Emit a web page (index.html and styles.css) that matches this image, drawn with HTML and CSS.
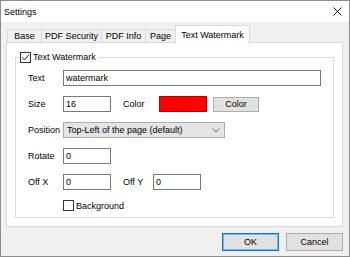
FILE: index.html
```html
<!DOCTYPE html>
<html>
<head>
    <meta charset="utf-8">
    <link rel="stylesheet" href="styles.css">
</head>
<body>
<div class="window">
    <div class="titlebar">
        <span>Settings</span>
        <svg class="close" width="9" height="9" viewBox="0 0 9 9">
            <path d="M0.5 0.5 L8.5 8.5 M8.5 0.5 L0.5 8.5" stroke="#000" stroke-width="0.9" fill="none"/>
        </svg>
    </div>

    <div class="tabs">
        <div class="tab tab-base">Base</div>
        <div class="tab tab-security">PDF Security</div>
        <div class="tab tab-info">PDF Info</div>
        <div class="tab tab-page">Page</div>
        <div class="tab tab-watermark active">Text Watermark</div>
    </div>

    <div class="panel">
        <fieldset class="group">
            <legend class="group-title">
                <span class="check checked">
                    <svg width="9" height="9" viewBox="0 0 9 9">
                        <path d="M1 4.5 L3.5 7 L8 1.5" stroke="#222" stroke-width="1" fill="none"/>
                    </svg>
                </span>
                Text Watermark
            </legend>

            <div class="rows">
                <div class="row">
                    <span class="lbl">Text</span>
                    <input class="field field-wide" type="text" value="watermark">
                </div>

                <div class="row">
                    <span class="lbl">Size</span>
                    <input class="field" type="text" value="16">
                    <span class="lbl2 lbl-color">Color</span>
                    <span class="swatch"></span>
                    <button class="btn btn-color">Color</button>
                </div>

                <div class="row">
                    <span class="lbl">Position</span>
                    <div class="combo">
                        <span>Top-Left of the page (default)</span>
                        <svg width="8" height="5" viewBox="0 0 8 5">
                            <path d="M0.5 0.5 L4 4 L7.5 0.5" stroke="#555" stroke-width="0.9" fill="none"/>
                        </svg>
                    </div>
                </div>

                <div class="row">
                    <span class="lbl">Rotate</span>
                    <input class="field" type="text" value="0">
                </div>

                <div class="row">
                    <span class="lbl">Off X</span>
                    <input class="field" type="text" value="0">
                    <span class="lbl2 lbl-offy">Off Y</span>
                    <input class="field" type="text" value="0">
                </div>

                <div class="row row-check">
                    <span class="lbl"></span>
                    <span class="check"></span>
                    <span class="check-text">Background</span>
                </div>
            </div>
        </fieldset>
    </div>

    <div class="buttons">
        <button class="btn btn-main btn-default">OK</button>
        <button class="btn btn-main">Cancel</button>
    </div>
</div>
</body>
</html>
```

FILE: styles.css
```css
* {
    box-sizing: border-box;
}

body {
    margin: 0;
    font-family: "Liberation Sans", Arial, sans-serif;
    font-size: 9px;
    color: #000000;
}

.window {
    width: 350px;
    height: 257px;
    border: 1px solid #8e8e8e;
    background-color: #f0f0f0;
    display: flex;
    flex-direction: column;
}

/* title bar */
.titlebar {
    height: 21px;
    flex: none;
    background-color: #ffffff;
    display: flex;
    align-items: center;
    justify-content: space-between;
    padding: 0 7px 0 3px;
}

.close {
    display: block;
}

/* tab strip */
.tabs {
    display: flex;
    align-items: flex-end;
    height: 18px;
    flex: none;
    margin: 3px 0 -1px 6px;
    position: relative;
    z-index: 1;
}

.tab {
    height: 13px;
    margin: 0 -1px 1px 0;
    border: 1px solid #d9d9d9;
    border-bottom: none;
    background-color: #f0f0f0;
    text-align: center;
    line-height: 12px;
    white-space: nowrap;
}

.tab.active {
    height: 18px;
    margin-bottom: 0;
    padding-top: 3px;
    background-color: #ffffff;
}

.tab-base { width: 35px; }
.tab-security { width: 61px; }
.tab-info { width: 45px; }
.tab-page { width: 31px; }
.tab-watermark { width: 75px; }

/* tab page */
.panel {
    height: 185px;
    flex: none;
    margin: 0 6px 0 5px;
    padding: 9px 8px 8px 8px;
    background-color: #ffffff;
    border: 1px solid #d9d9d9;
}

.group {
    height: 100%;
    margin: 0;
    padding: 0;
    border: 1px solid #dcdcdc;
}

.group-title {
    display: flex;
    align-items: center;
    gap: 2px;
    margin-left: 3px;
    padding: 0 2px 0 1px;
    line-height: 11px;
}

.check {
    width: 11px;
    height: 11px;
    border: 1px solid #333333;
    background-color: #ffffff;
    display: flex;
    align-items: center;
    justify-content: center;
    flex: none;
}

.rows {
    padding: 7px 0 0 12px;
}

.row {
    display: flex;
    align-items: center;
    height: 16px;
    margin-bottom: 10px;
}

.row-check {
    height: 11px;
}

.lbl {
    width: 35px;
    flex: none;
}

.lbl2 {
    margin-left: 12px;
    flex: none;
}

.lbl-color { width: 36px; }
.lbl-offy { width: 30px; }

.field {
    width: 48px;
    height: 16px;
    margin: 0;
    padding: 0 2px;
    border: 1px solid #7a7a7a;
    font-family: inherit;
    font-size: 9px;
    color: #000000;
    background-color: #ffffff;
    outline: none;
}

.field-wide {
    width: 258px;
}

.swatch {
    width: 48px;
    height: 16px;
    background-color: #ff0000;
    border: 1px solid #b40000;
}

.combo {
    width: 162px;
    height: 16px;
    border: 1px solid #adadad;
    background-color: #e5e5e5;
    display: flex;
    align-items: center;
    justify-content: space-between;
    padding: 0 4px 0 3px;
}

.check-text {
    margin-left: 2px;
}

/* buttons */
.btn {
    margin: 0;
    padding: 0;
    font-family: inherit;
    font-size: 9px;
    color: #000000;
    background-color: #e1e1e1;
    border: 1px solid #adadad;
}

.btn-color {
    width: 46px;
    height: 15px;
    margin-left: 6px;
}

.buttons {
    display: flex;
    justify-content: flex-end;
    gap: 7px;
    margin: 6px 6px 0 0;
}

.btn-main {
    width: 57px;
    height: 18px;
}

.btn-default {
    border-color: #0078d7;
    box-shadow: inset 0 0 0 1px #7fb7e8;
}
```
